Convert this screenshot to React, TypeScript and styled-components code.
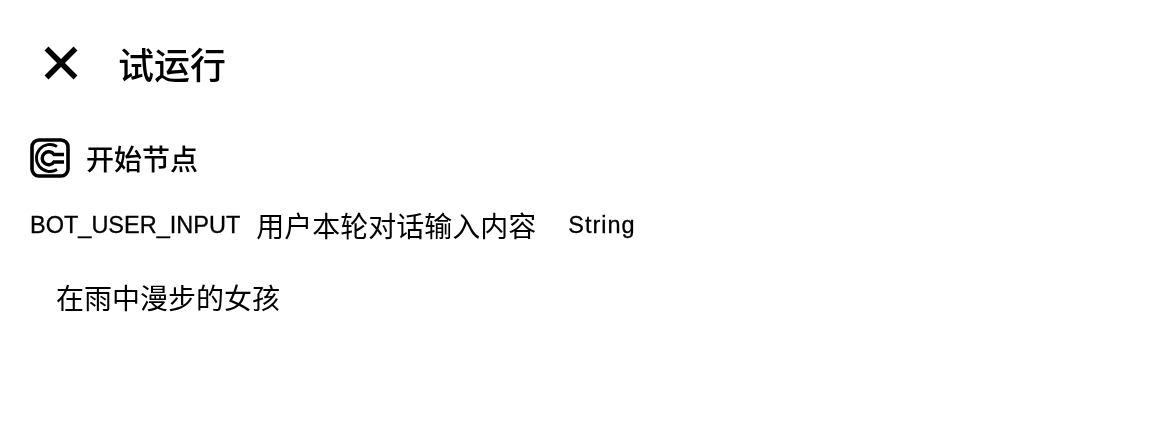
import React from "react";
import styled, { createGlobalStyle } from "styled-components";

const Global = createGlobalStyle`
  html, body { margin: 0; padding: 0; background: #fff; }
  body { font-family: "Liberation Sans", "Noto Sans CJK SC", sans-serif; color: #000; }
`;

const Page = styled.div`
  width: 1160px;
  height: 424px;
  box-sizing: border-box;
  padding: 38px 30px 0;
  display: flex;
  flex-direction: column;
  overflow: hidden;
  filter: grayscale(1) brightness(0.85) contrast(12);
`;

const Header = styled.div`
  display: flex;
  align-items: center;
  height: 50px;
  padding-left: 14px;
  gap: 40px;
`;

const CloseIcon = styled.svg`
  width: 34px;
  height: 34px;
  flex: none;
`;

const Title = styled.h1`
  margin: 0;
  font-size: 36px;
  line-height: 50px;
  font-weight: 500;
  font-family: "Noto Sans CJK SC", sans-serif;
`;

const NodeHeader = styled.div`
  display: flex;
  align-items: center;
  gap: 16px;
  margin-top: 48px;
  height: 44px;
`;

const NodeIcon = styled.svg`
  width: 40px;
  height: 40px;
  flex: none;
`;

const NodeTitle = styled.span`
  font-size: 28px;
  line-height: 40px;
  font-weight: 500;
  font-family: "Noto Sans CJK SC", sans-serif;
`;

const ParamRow = styled.div`
  display: flex;
  align-items: center;
  margin-top: 25px;
  height: 40px;
  font-size: 23.5px;
  -webkit-text-stroke: 0.3px #000;
`;

const ParamName = styled.span`
  margin-right: 16px;
`;

const ParamDesc = styled.span`
  font-size: 28px;
  font-family: "Noto Sans CJK SC", sans-serif;
  font-weight: 400;
  margin-right: 32px;
  -webkit-text-stroke: 0;
`;

const ParamType = styled.span`
  letter-spacing: 1px;
`;

const InputValue = styled.div`
  margin-top: 32px;
  padding-left: 26px;
  font-size: 28px;
  line-height: 40px;
  font-weight: 400;
  font-family: "Noto Sans CJK SC", sans-serif;
`;

export default function App() {
  return (
    <>
      <Global />
      <Page>
        <Header>
          <CloseIcon viewBox="0 0 34 34">
            <path d="M2.5 2.5 L31.5 31.5 M31.5 2.5 L2.5 31.5" stroke="#000" strokeWidth="5.5" fill="none" />
          </CloseIcon>
          <Title>试运行</Title>
        </Header>
        <NodeHeader>
          <NodeIcon viewBox="0 0 40 40">
            <rect x="2" y="2" width="36" height="36" rx="7" fill="none" stroke="#000" strokeWidth="3.6" />
            <path d="M27 8.5 A13.5 13.5 0 1 0 27 31.5" fill="none" stroke="#000" strokeWidth="2.8" />
            <path d="M34 16.5 H24 A6.5 6.5 0 1 0 24 24 H34" fill="none" stroke="#000" strokeWidth="3.4" />
          </NodeIcon>
          <NodeTitle>开始节点</NodeTitle>
        </NodeHeader>
        <ParamRow>
          <ParamName>BOT_USER_INPUT</ParamName>
          <ParamDesc>用户本轮对话输入内容</ParamDesc>
          <ParamType>String</ParamType>
        </ParamRow>
        <InputValue>在雨中漫步的女孩</InputValue>
      </Page>
    </>
  );
}
